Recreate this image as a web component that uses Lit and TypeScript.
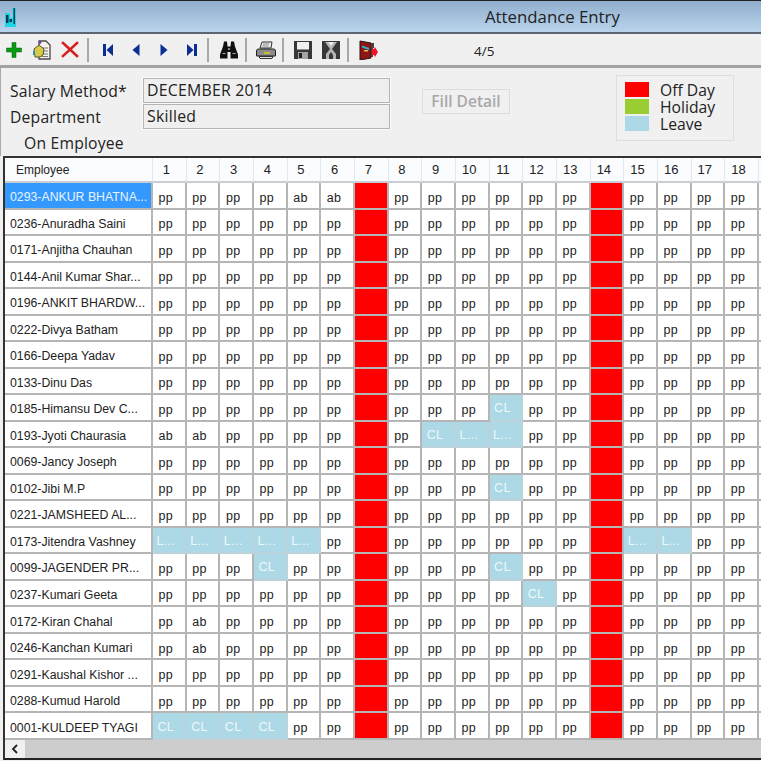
import { LitElement, html, css, svg } from "lit";
import { customElement } from "lit/decorators.js";

type Row = { n: string; m?: Record<number, string> };
const rows: Row[] = [
  { n: "0293-ANKUR BHATNA...", m: { 5: "ab", 6: "ab" } },
  { n: "0236-Anuradha Saini" },
  { n: "0171-Anjitha Chauhan" },
  { n: "0144-Anil Kumar Shar..." },
  { n: "0196-ANKIT BHARDW..." },
  { n: "0222-Divya Batham" },
  { n: "0166-Deepa Yadav" },
  { n: "0133-Dinu Das" },
  { n: "0185-Himansu Dev C...", m: { 11: "CL" } },
  { n: "0193-Jyoti Chaurasia", m: { 1: "ab", 2: "ab", 9: "CL", 10: "L...", 11: "L..." } },
  { n: "0069-Jancy Joseph" },
  { n: "0102-Jibi M.P", m: { 11: "CL" } },
  { n: "0221-JAMSHEED AL..." },
  { n: "0173-Jitendra Vashney", m: { 1: "L...", 2: "L...", 3: "L...", 4: "L...", 5: "L...", 15: "L...", 16: "L..." } },
  { n: "0099-JAGENDER PR...", m: { 4: "CL", 11: "CL" } },
  { n: "0237-Kumari Geeta", m: { 12: "CL" } },
  { n: "0172-Kiran Chahal", m: { 2: "ab" } },
  { n: "0246-Kanchan Kumari", m: { 2: "ab" } },
  { n: "0291-Kaushal Kishor ..." },
  { n: "0288-Kumud Harold" },
  { n: "0001-KULDEEP TYAGI", m: { 1: "CL", 2: "CL", 3: "CL", 4: "CL" } },
];
const days = Array.from({ length: 18 }, (_, i) => i + 1);

const icons: Record<string, unknown> = {
  plus: svg`<path d="M8 2.500h4v5.500h5.500v4H12v5.500H8V12H2.500V8H8z" fill="#0a9a12" stroke="#06600a" stroke-width=".5"/>`,
  doc: svg`<path d="M8 1h6l4 4v14H7V1z" fill="#f4f4ee" stroke="#4a4a4a" stroke-width="1.300"/><path d="M10 8h6M11 11h5M10 14h6M10 16.500h6" stroke="#777"/><path d="M2 9l5-4 5 4-1 6-3 2H3z" fill="#d8c94a" stroke="#5b5520"/><rect x="1" y="11" width="2" height="4" fill="#2a8fc0"/><circle cx="8" cy="2.500" r="1.400" fill="#7a3fb0"/>`,
  del: svg`<path d="M3 3l14 13M17 3L3 16" stroke="#d81f1f" stroke-width="2.600" stroke-linecap="square"/>`,
  first: svg`<path d="M5 4h3v12H5zM15 4v12L8.500 10z" fill="#0b2e94"/>`,
  prev: svg`<path d="M13.500 4v12L6.500 10z" fill="#0b2e94"/>`,
  next: svg`<path d="M6.500 4v12l7-6z" fill="#0b2e94"/>`,
  last: svg`<path d="M15 4h-3v12h3zM5 4v12l6.500-6z" fill="#0b2e94"/>`,
  find: svg`<path d="M5 1.500h3l.5 5h3l.5-5h3l1 5 3 8v4h-7.500v-6.500h-3V18.500H1v-4l3-8z" fill="#111"/><path d="M3.500 13.500h3M13.500 13.500h3" stroke="#aaa" stroke-width="1.200"/><rect x="9" y="8" width="2" height="2" fill="#888"/>`,
  print: svg`<path d="M6 2h10l-1 6H4z" fill="#ececec" stroke="#333"/><path d="M7 4h6M6.500 6h6" stroke="#888"/><path d="M2.500 9h15q2 0 2 2v5H.5v-5q0-2 2-2z" fill="#8c8c8c" stroke="#222"/><path d="M3 16.500h14l-1 2H4z" fill="#e4e4e4" stroke="#333"/><rect x="8" y="12" width="6" height="2" fill="#c9bd2e"/>`,
  save: svg`<path d="M1 1h18v18H1z" fill="#383838"/><rect x="4" y="2" width="12" height="7.500" fill="#efefef"/><rect x="5" y="12" width="10" height="7" fill="#a5a5a5"/><rect x="6" y="13" width="3" height="5" fill="#222"/>`,
  saveall: svg`<path d="M1 1h18v18H1z" fill="#383838"/><path d="M4 2l5 7-4 5v5h3v-4l2-3 2 3v4h3v-5l-4-5 5-7z" fill="#b5b5b5"/><path d="M7 2h6l-3 4z" fill="#eee"/>`,
  exit: svg`<path d="M2 1l11 2v15L2 20z" fill="#8e1616" stroke="#2a1010"/><path d="M13 3h3v5h-1v9h-2z" fill="#444"/><path d="M4 5.500l7 2.500v2L4 7.500z" fill="#25b5c9"/><rect x="6" y="10" width="4" height="1.500" fill="#d9c04a"/><path d="M14 9h2l1-2 3 5-3 5-1-2h-2z" fill="#f0142a"/>`,
};

@customElement("app-root")
export class AppRoot extends LitElement {
  static styles = css`
    :host { display: block; width: 761px; height: 761px; overflow: hidden; background: #f0f0f0;
      font-family: "Open Sans", "Noto Sans", sans-serif; color: #222; }
    .top { height: 1px; background: #222; }
    .title { height: 31px; border-bottom: 2px solid #5d6670;
      background: linear-gradient(#90aecd, #b9d4ec); display: flex; align-items: center; position: relative; padding-left: 4px; }
    .app { height: 20px; width: 13px; display: block; }
    .title-text { position: absolute; left: 485px; top: 5px; font-size: 16.800px; line-height: 22px; white-space: nowrap; }
    .toolbar { height: 31px; display: flex; align-items: center; background: #f0f0f0; border-bottom: 3px solid #a3a3a3; }
    .btn { width: 28px; height: 24px; display: flex; align-items: center; justify-content: center; flex: none; }
    .btn svg { width: 20px; height: 20px; display: block; }
    .sep { width: 2px; height: 24px; background: #a8a8a8; flex: none; margin: 0 5px 0 2px; }
    .s1 { margin: 0 5px 0 3px; }
    .s2 { margin: 0 6px 0 1px; }
    .pos { font-size: 13.500px; margin-left: 92px; padding-top: 2px; }
    .form { height: 88px; display: flex; box-sizing: border-box; padding: 10px 0 0 9px; border-left: 1px solid #aaa; }
    .fields { display: grid; grid-template-columns: 133px 247px; grid-auto-rows: 26px; width: 412px; flex: none; font-size: 15.700px; line-height: 26px; letter-spacing: .2px; }
    .field { box-sizing: border-box; height: 25px; border: 1px solid #b4b4b4; outline: 1px solid #fbfbfb; padding-left: 3px; font-size: 15.800px; line-height: 23px; background: #efefef; letter-spacing: .25px; }
    .emp { grid-column: 1 / 3; padding-left: 14px; }
    .fill { flex: none; box-sizing: border-box; width: 88px; height: 25px; margin-top: 11px; border: 1px solid #dcdcdc; font-size: 15.500px; line-height: 23px; color: #a8a8a8; text-align: center; font-weight: 600; white-space: nowrap; }
    .legend { flex: none; box-sizing: border-box; width: 118px; height: 66px; margin: -3px 0 0 106px; border: 1px solid #dedede; padding: 6px 0 0 8px; display: grid; grid-template-columns: 24px 1fr; column-gap: 11px; grid-auto-rows: 17px; font-size: 15.700px; line-height: 17px; }
    .sw { height: 15px; }
    .red { background: #ff0000; } .green { background: #9acd32; } .blue { background: #add8e6; }
    .frame { margin-left: 3px; border-left: 2px solid #333; border-top: 2px solid #333; border-bottom: 2px solid #222; height: 604px; box-sizing: border-box; background: #fff; overflow: hidden; position: relative; }
    .grid { display: grid; grid-template-columns: 148px repeat(18, 33.67px) 20px; grid-template-rows: 25px repeat(21, 26.52px); width: 790px; font-family: "Liberation Sans", Arial, sans-serif; }
    .h { background: #fbfcfe; border-right: 1px solid #e1e8f2; border-bottom: 2px solid #c8cdd3; box-sizing: border-box; font-size: 13px; display: flex; align-items: center; justify-content: center; padding-right: 6px; }
    .h.e { justify-content: flex-start; padding: 0 0 0 11px; font-size: 12px; }
    .c { box-sizing: border-box; border-right: 2px solid #b5b5b5; border-bottom: 2px solid #b5b5b5; display: flex; align-items: center; justify-content: center; font-size: 12.500px; letter-spacing: .3px; padding: 5px 6px 0 0; overflow: hidden; white-space: nowrap; }
    .c.n { justify-content: flex-start; padding: 4px 0 0 5px; font-size: 12.300px; letter-spacing: 0; }
    .c.sel { background: #3399ff; color: #e8f3ff; }
    .c.off { background: #ff0000; }
    .c.lv { background: #add8e6; color: #eef8fb; border-color: #bcd2da; padding-top: 2px; }
    .sb { position: absolute; left: 0; right: 0; bottom: 0; height: 18px; background: #cdcdcd; display: flex; }
    .arrow { width: 20px; height: 18px; background: #f0f0f0; display: flex; align-items: center; justify-content: center; }
    .arrow svg { width: 10px; height: 10px; display: block; }
  `;

  private icon(k: string) {
    return html`<div class="btn"><svg viewBox="0 0 20 20">${icons[k]}</svg></div>`;
  }

  private cell(r: Row, d: number) {
    if (d === 7 || d === 14) return html`<div class="c off"></div>`;
    const v = r.m?.[d] ?? "pp";
    const lv = v === "CL" || v === "L...";
    return html`<div class="c ${lv ? "lv" : ""}">${v}</div>`;
  }

  render() {
    return html`
      <div class="top"></div>
      <div class="title">
        <svg class="app" viewBox="0 0 13 20"><path d="M1 6h5v14H1zM6 11h3v9H6zM8.500 1h3.500v19H8.500z" fill="#19d5e5"/><path d="M2 8h2.500v8H2zM9.500 1h1.500v16H9.500zM5.500 12H8v3H5.500z" fill="#123a55"/></svg>
        <div class="title-text">Attendance Entry</div>
      </div>
      <div class="toolbar">
        ${this.icon("plus")}${this.icon("doc")}${this.icon("del")}
        <div class="sep s1"></div>
        ${this.icon("first")}${this.icon("prev")}${this.icon("next")}${this.icon("last")}
        <div class="sep s2"></div>
        ${this.icon("find")}
        <div class="sep"></div>
        ${this.icon("print")}
        <div class="sep"></div>
        ${this.icon("save")}${this.icon("saveall")}
        <div class="sep"></div>
        ${this.icon("exit")}
        <div class="pos">4/5</div>
      </div>
      <div class="form">
        <div class="fields">
          <div>Salary Method*</div><div class="field">DECEMBER 2014</div>
          <div>Department</div><div class="field">Skilled</div>
          <div class="emp">On Employee</div>
        </div>
        <div class="fill">Fill Detail</div>
        <div class="legend">
          <div class="sw red"></div><div>Off Day</div>
          <div class="sw green"></div><div>Holiday</div>
          <div class="sw blue"></div><div>Leave</div>
        </div>
      </div>
      <div class="frame">
        <div class="grid">
          <div class="h e">Employee</div>
          ${days.map((d) => html`<div class="h">${d}</div>`)}
          <div class="h"></div>
          ${rows.map((r, i) => html`
            <div class="c n ${i === 0 ? "sel" : ""}">${r.n}</div>
            ${days.map((d) => this.cell(r, d))}
            <div class="c"></div>
          `)}
        </div>
        <div class="sb"><div class="arrow"><svg viewBox="0 0 10 10"><path d="M7 1L3 5l4 4" fill="none" stroke="#222" stroke-width="1.800"/></svg></div></div>
      </div>
    `;
  }
}
